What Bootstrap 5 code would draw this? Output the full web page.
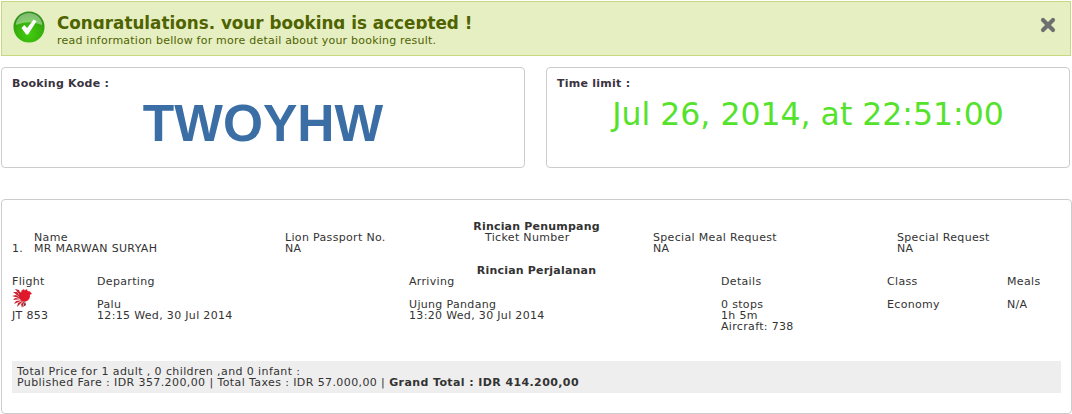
<!DOCTYPE html>
<html lang="id">
<head>
  <meta charset="UTF-8" />
  <meta name="viewport" content="width=device-width, initial-scale=1" />
  <title>Booking result</title>
  <link href="https://cdn.jsdelivr.net/npm/bootstrap@5.3.3/dist/css/bootstrap.min.css" rel="stylesheet" />
  <style>
    body { background: #fff; color: #333; font-family: "DejaVu Sans", Verdana, sans-serif; font-size: 11px; line-height: 11px; letter-spacing: .33px; padding: 1px 0 0 1px; overflow: hidden; }
    .ok-bar { height: 55px; background: #e6efc2; border: 1px solid #c6d880; color: #4f6300; padding: 9px 14px 0 11px; margin: 0 1px 11px 0; }
    .ok-title { font-size: 16.8px; font-weight: 700; line-height: 20px; height: 16px; overflow: hidden; letter-spacing: 0; }
    .ok-sub { line-height: 12px; margin-top: 6px; letter-spacing: .22px; }
    .ok-text { margin-left: 12px; margin-top: 2px; }
    .close-mark { margin-top: 6px; }
    .info-box { height: 101px; width: 524px; border: 1px solid #ccc; border-radius: 4px; padding: 10px 10px; }
    .info-box + .info-box { margin-left: 21px; }
    .info-label { font-weight: 700; color: #3a3340; line-height: 12px; letter-spacing: .25px; }
    .code-big { font-family: "Liberation Sans", Arial, sans-serif; font-weight: 700; font-size: 51.5px; line-height: 48px; letter-spacing: 0; color: #3a6ea5; text-align: center; margin-top: 9px; }
    .time-big { font-size: 31.5px; line-height: 34px; letter-spacing: 0; color: #55e22c; text-align: center; margin-top: 7px; }
    .detail-box { height: 215px; margin: 31px 0 0; width: 1071px; border: 1px solid #ccc; border-radius: 4px; padding: 21px 10px 0 10px; }
    .sect-head { font-weight: 700; text-align: center; line-height: 11px; letter-spacing: .2px; }
    .pax-grid { display: grid; grid-template-columns: 22px 251px 200px 168px 244px 1fr; }
    .flight-grid { display: grid; grid-template-columns: 85px 312px 312px 166px 120px 1fr; }
    .sect-gap { margin-top: 11px; }
    .cell-gap { height: 12px; }
    .logo-mark { display: block; margin: 1px 0 2px; }
    .price-bar { background: #eee; width: 1049px; height: 32px; margin-top: 29px; padding: 5px 5px 0; letter-spacing: .4px; }
  </style>
</head>
<body>
  <div class="ok-bar d-flex align-items-start">
    <svg width="32" height="32" viewBox="0 0 34 34" class="flex-shrink-0">
      <defs>
        <radialGradient id="okBall" cx="50%" cy="72%" r="62%">
          <stop offset="0" stop-color="#44cc10" />
          <stop offset=".7" stop-color="#36b00c" />
          <stop offset="1" stop-color="#2f9018" />
        </radialGradient>
      </defs>
      <circle cx="17" cy="17" r="16.5" fill="url(#okBall)" />
      <path d="M3 15 A14 13 0 0 1 31 15 Q17 9 3 15Z" fill="#fff" opacity=".4" />
      <path d="M9 18 l3-3 3 3 7-9 3 2-9 14-2 0z" fill="#fff" />
    </svg>
    <div class="ok-text flex-grow-1">
      <div class="ok-title">Congratulations, your booking is accepted !</div>
      <div class="ok-sub">read information bellow for more detail about your booking result.</div>
    </div>
    <svg width="16" height="16" viewBox="0 0 16 16" class="flex-shrink-0 close-mark">
      <path d="M3 3 L13 13 M13 3 L3 13" stroke="#6f6f6f" stroke-width="4.2" stroke-linecap="round" />
    </svg>
  </div>

  <div class="d-flex">
    <div class="info-box">
      <div class="info-label">Booking Kode :</div>
      <div class="code-big">TWOYHW</div>
    </div>
    <div class="info-box">
      <div class="info-label">Time limit :</div>
      <div class="time-big">Jul 26, 2014, at 22:51:00</div>
    </div>
  </div>

  <div class="detail-box">
    <div class="sect-head">Rincian Penumpang</div>
    <div class="pax-grid">
      <div></div><div>Name</div><div>Lion Passport No.</div><div>Ticket Number</div><div>Special Meal Request</div><div>Special Request</div>
      <div>1.</div><div>MR MARWAN SURYAH</div><div>NA</div><div></div><div>NA</div><div>NA</div>
    </div>
    <div class="sect-head sect-gap">Rincian Perjalanan</div>
    <div class="flight-grid">
      <div>Flight</div><div>Departing</div><div>Arriving</div><div>Details</div><div>Class</div><div>Meals</div>
      <div>
        <svg width="20" height="20" viewBox="0 0 20 20" class="logo-mark">
          <circle cx="12.5" cy="8" r="5.5" fill="#e0182a" />
          <path d="M9 3 L12 1 L12.5 2.5 L15 1 L15.5 3 L18 3.5 L20 6 L17 7 L14 6Z" fill="#e0182a" />
          <path d="M11 11 L3 1 L7 2Z M10 11 L1 4 L5 4Z M10 11 L0 8 L4 7Z M10 11 L1 12 L3 10Z M11 12 L2 16 L4 13Z M12 12 L5 19 L6 15Z M13 12 L10 20 L9 16Z" fill="#c9202f" />
          <path d="M13 13 L14 17 L11 19Z" fill="#7d2c38" />
        </svg>
        <div>JT 853</div>
      </div>
      <div><div class="cell-gap"></div>Palu<br>12:15 Wed, 30 Jul 2014</div>
      <div><div class="cell-gap"></div>Ujung Pandang<br>13:20 Wed, 30 Jul 2014</div>
      <div><div class="cell-gap"></div>0 stops<br>1h 5m<br>Aircraft: 738</div>
      <div><div class="cell-gap"></div>Economy</div>
      <div><div class="cell-gap"></div>N/A</div>
    </div>
    <div class="price-bar">
      Total Price for 1 adult , 0 children ,and 0 infant :<br>
      Published Fare : IDR 357.200,00 | Total Taxes : IDR 57.000,00 | <b>Grand Total : IDR 414.200,00</b>
    </div>
  </div>
  <script src="https://cdn.jsdelivr.net/npm/bootstrap@5.3.3/dist/js/bootstrap.bundle.min.js"></script>
</body>
</html>
